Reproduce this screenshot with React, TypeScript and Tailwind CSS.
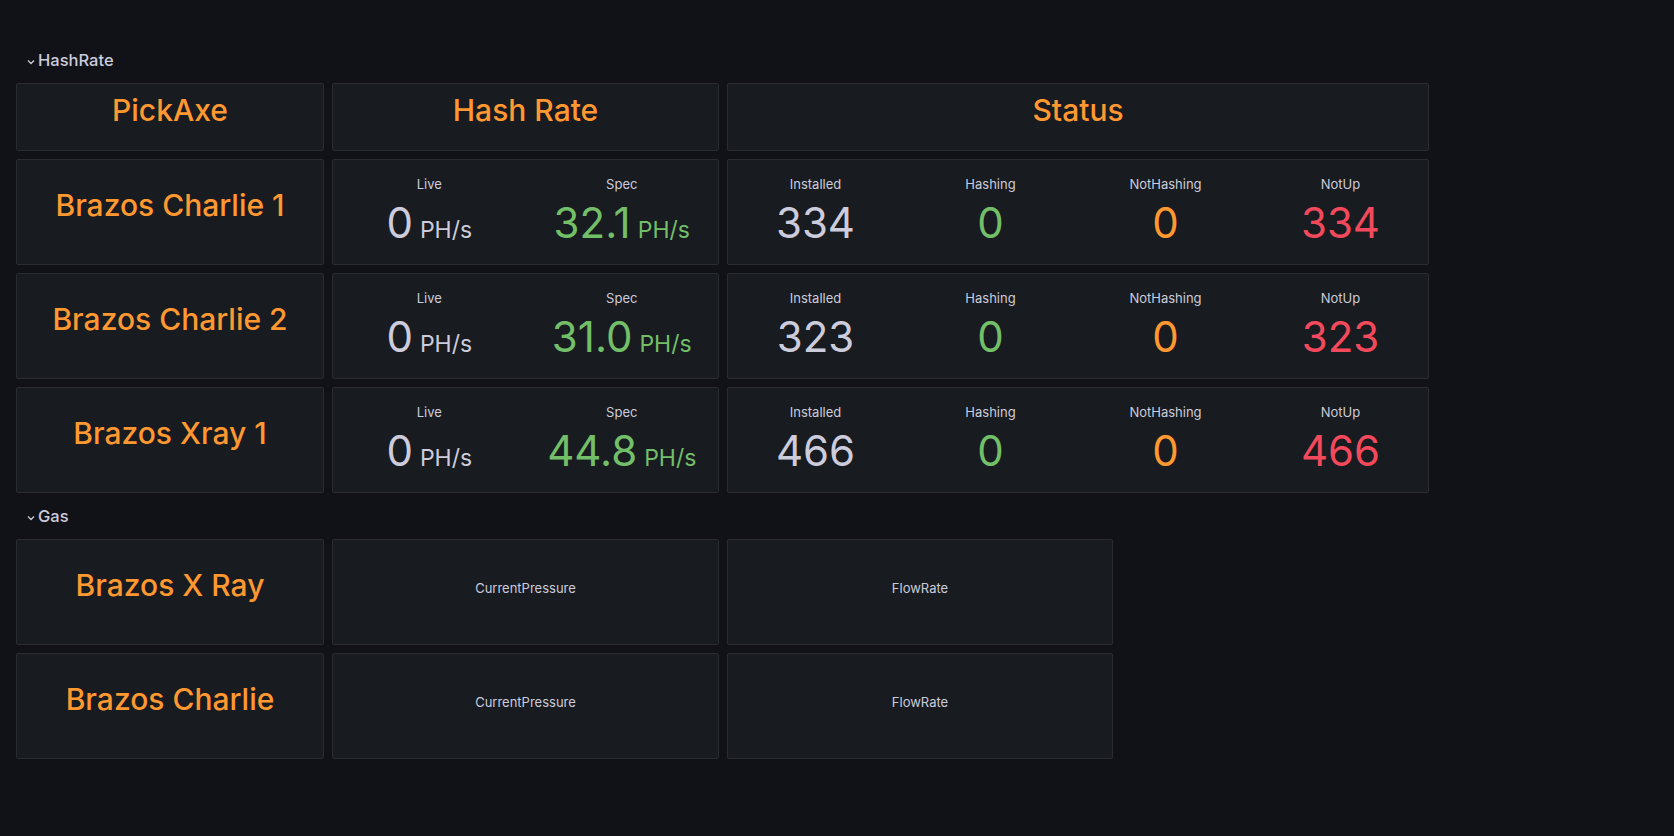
import React from 'react'

const FONT = { fontFamily: 'Inter, "Noto Sans", "Liberation Sans", sans-serif' }

type Miner = {
  name: string
  spec: string
  installed: number
  notUp: number
}

const miners: Miner[] = [
  { name: 'Brazos Charlie 1', spec: '32.1', installed: 334, notUp: 334 },
  { name: 'Brazos Charlie 2', spec: '31.0', installed: 323, notUp: 323 },
  { name: 'Brazos Xray 1', spec: '44.8', installed: 466, notUp: 466 },
]

const gasSites = ['Brazos X Ray', 'Brazos Charlie']

function Panel({ className = '', children }: { className?: string; children?: React.ReactNode }) {
  return (
    <div className={`rounded-[2px] border border-[#2a2c32] bg-[#181b1f] ${className}`}>{children}</div>
  )
}

function RowHeader({ title }: { title: string }) {
  return (
    <div className="flex h-[30px] items-center pl-[11px]">
      <svg width="8" height="6" viewBox="0 0 8 6" className="mt-[3px]">
        <path d="M1 1.5 L4 4.5 L7 1.5" fill="none" stroke="#ccccdc" strokeWidth="1.3" />
      </svg>
      <span className="ml-[3px] text-[16.5px] font-medium text-[#ccccdc]">{title}</span>
    </div>
  )
}

function TitlePanel({ text, className = '' }: { text: string; className?: string }) {
  return (
    <Panel className={`flex items-center justify-center pb-[14px] ${className}`}>
      <span className="text-[30px] font-medium text-[#ff9830]">{text}</span>
    </Panel>
  )
}

function Stat({
  label,
  value,
  unit,
  color,
}: {
  label: string
  value: string | number
  unit?: string
  color: string
}) {
  return (
    <div className="flex flex-col items-center pt-[16px]">
      <div className="text-[13px] leading-[16px] text-[#ccccdc]">{label}</div>
      <div className={`mt-[10px] flex items-baseline ${color}`}>
        <span className="text-[42px] leading-[42px]">{value}</span>
        {unit && <span className="ml-[7px] text-[23px] leading-[42px]">{unit}</span>}
      </div>
    </div>
  )
}

export default function App() {
  return (
    <div className="min-h-screen w-full bg-[#111217] px-4 pt-[45px]" style={FONT}>
      <div className="flex flex-col gap-2">
        <RowHeader title="HashRate" />

        <div className="flex gap-2">
          <TitlePanel text="PickAxe" className="h-[68px] w-[308px]" />
          <TitlePanel text="Hash Rate" className="h-[68px] w-[387px]" />
          <TitlePanel text="Status" className="h-[68px] w-[702px]" />
        </div>

        {miners.map((m) => (
          <div key={m.name} className="flex gap-2">
            <TitlePanel text={m.name} className="h-[106px] w-[308px]" />
            <Panel className="grid h-[106px] w-[387px] grid-cols-2">
              <Stat label="Live" value={0} unit="PH/s" color="text-[#ccccdc]" />
              <Stat label="Spec" value={m.spec} unit="PH/s" color="text-[#73bf69]" />
            </Panel>
            <Panel className="grid h-[106px] w-[702px] grid-cols-4">
              <Stat label="Installed" value={m.installed} color="text-[#ccccdc]" />
              <Stat label="Hashing" value={0} color="text-[#73bf69]" />
              <Stat label="NotHashing" value={0} color="text-[#ff9830]" />
              <Stat label="NotUp" value={m.notUp} color="text-[#f2495c]" />
            </Panel>
          </div>
        ))}

        <RowHeader title="Gas" />

        {gasSites.map((site) => (
          <div key={site} className="flex gap-2">
            <TitlePanel text={site} className="h-[106px] w-[308px]" />
            <Panel className="flex h-[106px] w-[387px] items-center justify-center pb-[6px]">
              <span className="text-[13px] text-[#ccccdc]">CurrentPressure</span>
            </Panel>
            <Panel className="flex h-[106px] w-[386px] items-center justify-center pb-[6px]">
              <span className="text-[13px] text-[#ccccdc]">FlowRate</span>
            </Panel>
          </div>
        ))}
      </div>
    </div>
  )
}
